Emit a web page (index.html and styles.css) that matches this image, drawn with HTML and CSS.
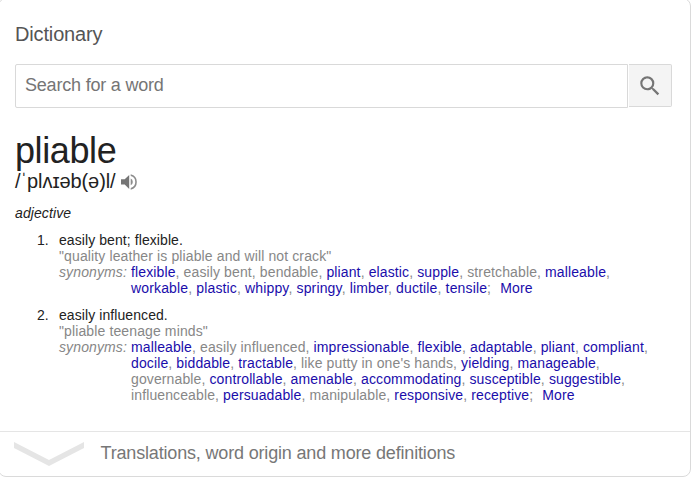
FILE: index.html
```html
<!DOCTYPE html>
<html lang="en">
<head>
<meta charset="utf-8">
<title>Dictionary</title>
<link rel="stylesheet" href="styles.css">
</head>
<body>
<main class="card">
  <div class="content">
    <h1 class="title">Dictionary</h1>
    <form class="search">
      <input class="field" type="text" placeholder="Search for a word" aria-label="Search for a word">
      <button class="go" type="button" aria-label="Search">
        <svg width="26" height="26" viewBox="0 0 24 24" fill="#757575"><path d="M15.5 14h-.79l-.28-.27A6.47 6.47 0 0 0 16 9.5 6.5 6.5 0 1 0 9.5 16c1.61 0 3.09-.59 4.23-1.57l.27.28v.79l5 4.99L20.49 19l-4.99-5zm-6 0C7.01 14 5 11.99 5 9.5S7.01 5 9.5 5 14 7.01 14 9.5 11.99 14 9.5 14z"/></svg>
      </button>
    </form>
    <h2 class="word">pliable</h2>
    <div class="pron"><span class="ipa">/ˈplʌɪəb(ə)l/</span>
      <svg class="speaker" width="16" height="16" viewBox="0 0 16 16"><path fill="#757575" d="M0 5.2v5.4h3.7L8.2 15V1L3.7 5.2z"/><path fill="#8c8c8c" d="M9.7 4.5v6.8a3.8 3.8 0 0 0 0-6.8zM9.7 .3v1.8a6.1 6.1 0 0 1 0 11.8v1.8a7.9 7.9 0 0 0 0-15.4z"/></svg>
    </div>
    <div class="pos">adjective</div>
    <ol class="senses">
      <li class="sense">
        <span class="num">1.</span>
        <div>
          <div class="def">easily bent; flexible.</div>
          <div class="example">"quality leather is pliable and will not crack"</div>
          <div class="syn"><i class="label">synonyms:</i><div class="words"><a>flexible</a>, easily bent, bendable, <a>pliant</a>, <a>elastic</a>, <a>supple</a>, stretchable, <a>malleable</a>,<br><span class="loose"><a>workable</a>, <a>plastic</a>, <a>whippy</a>, <a>springy</a>, <a>limber</a>, <a>ductile</a>, <a>tensile</a>; <a class="more">More</a></span></div></div>
        </div>
      </li>
      <li class="sense">
        <span class="num">2.</span>
        <div>
          <div class="def">easily influenced.</div>
          <div class="example">"pliable teenage minds"</div>
          <div class="syn"><i class="label">synonyms:</i><div class="words"><a>malleable</a>, easily influenced, <a>impressionable</a>, <a>flexible</a>, <a>adaptable</a>, <a>pliant</a>, <a>compliant</a>,<br><a>docile</a>, <a>biddable</a>, <a>tractable</a>, like putty in one's hands, <a>yielding</a>, <a>manageable</a>,<br>governable, <a>controllable</a>, <a>amenable</a>, <a>accommodating</a>, <a>susceptible</a>, <a>suggestible</a>,<br>influenceable, <a>persuadable</a>, manipulable, <a>responsive</a>, <a>receptive</a>; <a class="more">More</a></div></div>
        </div>
      </li>
    </ol>
  </div>
  <div class="expand">
    <svg class="chevron" width="70" height="24" viewBox="0 0 70 24"><path fill="#e5e5e5" d="M0 0l35 18L70 0v6L35 24 0 6z"/></svg>
    <span class="expand-text">Translations, word origin and more definitions</span>
  </div>
</main>
</body>
</html>
```
FILE: styles.css
```css
* { box-sizing: border-box; }
body { margin: 0; overflow: hidden; background: #fff; font-family: "Liberation Sans", Arial, sans-serif; font-size: 14px; line-height: 16px; color: #222; }
.card { width: 693px; height: 479px; margin: -2px 0 0 -2px; border: 1px solid #dadada; border-radius: 8px; display: flex; flex-direction: column; }
.content { flex: 1; padding: 23px 18px 0 16px; }
.title { margin: 0; font-size: 20px; font-weight: 400; line-height: 24px; letter-spacing: -.15px; color: #555; }
.search { display: flex; margin: 18px 0 0; }
.field { flex: 1; height: 44px; padding: 0 9px 2px; border: 1px solid #d9d9d9; border-radius: 2px 0 0 2px; font: 18px "Liberation Sans", Arial, sans-serif; letter-spacing: -.2px; color: #222; outline: 0; }
.field::placeholder { color: #757575; opacity: 1; }
.go { width: 43px; height: 43px; margin-left: 1px; padding: 0; border: 1px solid #d9d9d9; border-left: 0; border-radius: 0 2px 2px 0; background: #f4f4f4; display: flex; align-items: center; justify-content: center; }
.word { margin: 22px 0 0; font-size: 36px; font-weight: 400; line-height: 42px; letter-spacing: -.4px; }
.pron { display: flex; align-items: center; height: 20px; font-size: 20px; line-height: 20px; letter-spacing: -.08px; }
.ipa { margin-top: -2px; }
.speaker { margin-left: 5px; }
.pos { margin-top: 13px; font-style: italic; letter-spacing: .1px; }
.senses { list-style: none; margin: 11px 0 0; padding: 0 0 0 22px; letter-spacing: .12px; }
.sense { display: flex; margin-bottom: 11px; }
.num { width: 22px; flex: none; letter-spacing: 0; }
.def { letter-spacing: .08px; }
.example, .syn { color: #878787; }
.syn { display: flex; }
.label { width: 72px; flex: none; }
.words { white-space: nowrap; }
.words a { color: #1a0dab; }
.loose { letter-spacing: .145px; }
.more { margin-left: 5px; }
.expand { height: 45px; padding-left: 15px; display: flex; align-items: center; border-top: 1px solid #e5e5e5; font-size: 18px; line-height: 22px; letter-spacing: -.17px; color: #777; }
.chevron { margin-right: 16.5px; }
.expand-text { margin-top: -3px; }
```
